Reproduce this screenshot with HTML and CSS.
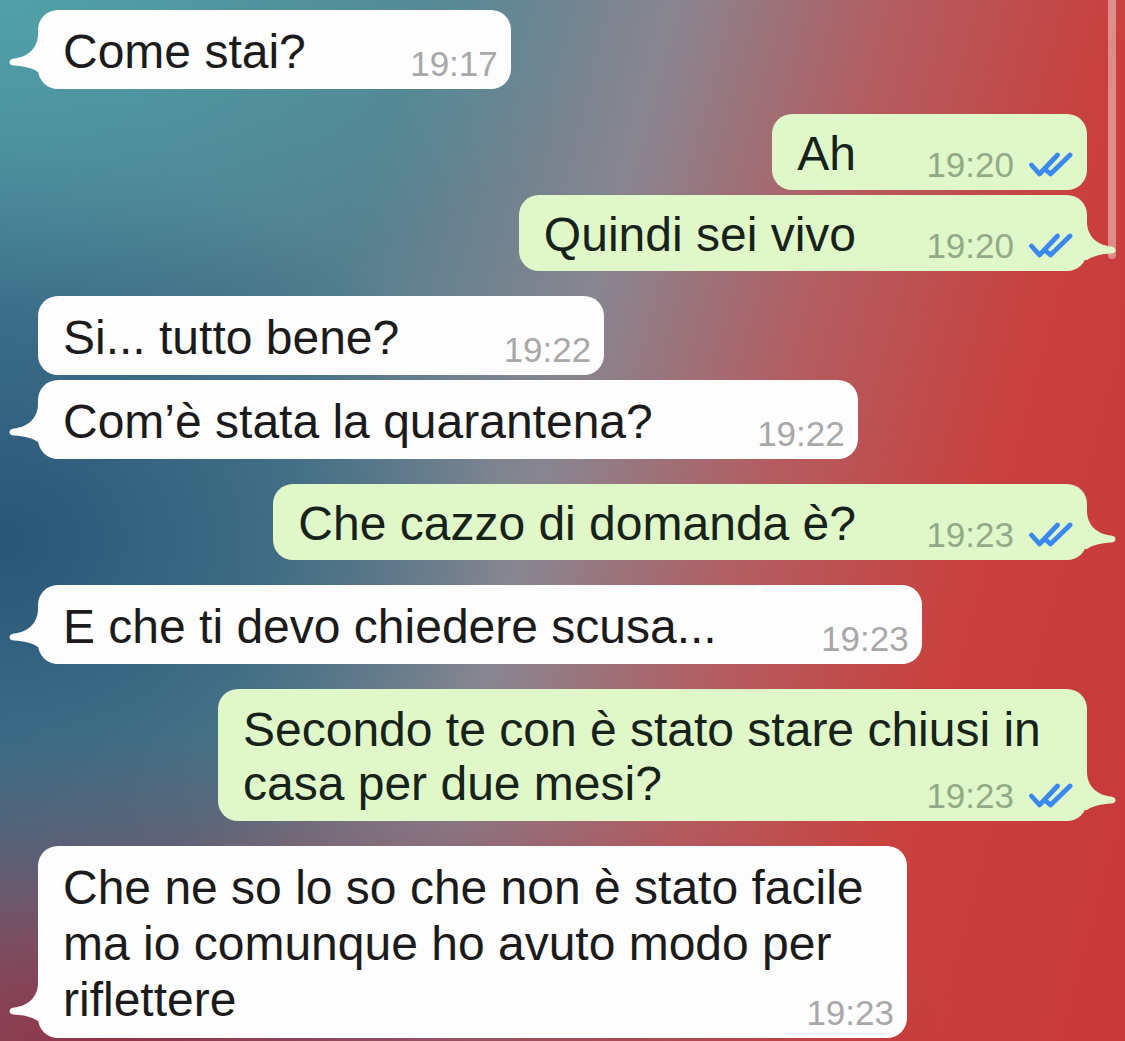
FILE: index.html
```html
<!DOCTYPE html>
<html lang="it">
<head>
    <meta charset="UTF-8">
    <meta name="viewport" content="width=device-width, initial-scale=1.0">
    <title>Chat</title>
    <link rel="stylesheet" href="styles.css">
</head>
<body>
    <div class="scrollbar"></div>

    <div class="chat">
        <div class="msg in">
            <p class="text">Come stai?<span class="pad"></span></p>
            <div class="meta"><span class="time">19:17</span></div>
            <svg class="tail" viewBox="0 0 34 40" width="34" height="40"><path d="M34 0 L30 0 C30 14 20 23 6 24.5 C0 25 0 31.5 6 31.5 C16 32 24 34 30 38 L34 38 Z"/></svg>
        </div>

        <div class="msg out">
            <p class="text">Ah<span class="pad"></span></p>
            <div class="meta">
                <span class="time">19:20</span>
                <svg class="ticks" viewBox="0 0 44 25" width="44" height="25"><path d="M2.5 13 L10.5 22 L28.5 3 M17.5 18.5 L21.5 22 L41 3"/></svg>
            </div>
        </div>

        <div class="msg out cont">
            <p class="text">Quindi sei vivo<span class="pad"></span></p>
            <div class="meta">
                <span class="time">19:20</span>
                <svg class="ticks" viewBox="0 0 44 25" width="44" height="25"><path d="M2.5 13 L10.5 22 L28.5 3 M17.5 18.5 L21.5 22 L41 3"/></svg>
            </div>
            <svg class="tail" viewBox="0 0 34 40" width="34" height="40"><path d="M34 0 L30 0 C30 14 20 23 6 24.5 C0 25 0 31.5 6 31.5 C16 32 24 34 30 38 L34 38 Z"/></svg>
        </div>

        <div class="msg in">
            <p class="text">Si... tutto bene?<span class="pad"></span></p>
            <div class="meta"><span class="time">19:22</span></div>
        </div>

        <div class="msg in cont">
            <p class="text">Com’è stata la quarantena?<span class="pad"></span></p>
            <div class="meta"><span class="time">19:22</span></div>
            <svg class="tail" viewBox="0 0 34 40" width="34" height="40"><path d="M34 0 L30 0 C30 14 20 23 6 24.5 C0 25 0 31.5 6 31.5 C16 32 24 34 30 38 L34 38 Z"/></svg>
        </div>

        <div class="msg out">
            <p class="text">Che cazzo di domanda è?<span class="pad"></span></p>
            <div class="meta">
                <span class="time">19:23</span>
                <svg class="ticks" viewBox="0 0 44 25" width="44" height="25"><path d="M2.5 13 L10.5 22 L28.5 3 M17.5 18.5 L21.5 22 L41 3"/></svg>
            </div>
            <svg class="tail" viewBox="0 0 34 40" width="34" height="40"><path d="M34 0 L30 0 C30 14 20 23 6 24.5 C0 25 0 31.5 6 31.5 C16 32 24 34 30 38 L34 38 Z"/></svg>
        </div>

        <div class="msg in">
            <p class="text">E che ti devo chiedere scusa...<span class="pad"></span></p>
            <div class="meta"><span class="time">19:23</span></div>
            <svg class="tail" viewBox="0 0 34 40" width="34" height="40"><path d="M34 0 L30 0 C30 14 20 23 6 24.5 C0 25 0 31.5 6 31.5 C16 32 24 34 30 38 L34 38 Z"/></svg>
        </div>

        <div class="msg out long">
            <p class="text">Secondo te con è stato stare chiusi in casa per due mesi?<span class="pad"></span></p>
            <div class="meta">
                <span class="time">19:23</span>
                <svg class="ticks" viewBox="0 0 44 25" width="44" height="25"><path d="M2.5 13 L10.5 22 L28.5 3 M17.5 18.5 L21.5 22 L41 3"/></svg>
            </div>
            <svg class="tail" viewBox="0 0 34 40" width="34" height="40"><path d="M34 0 L30 0 C30 14 20 23 6 24.5 C0 25 0 31.5 6 31.5 C16 32 24 34 30 38 L34 38 Z"/></svg>
        </div>

        <div class="msg in long">
            <p class="text">Che ne so lo so che non è stato facile ma io comunque ho avuto modo per riflettere<span class="pad"></span></p>
            <div class="meta"><span class="time">19:23</span></div>
            <svg class="tail" viewBox="0 0 34 40" width="34" height="40"><path d="M34 0 L30 0 C30 14 20 23 6 24.5 C0 25 0 31.5 6 31.5 C16 32 24 34 30 38 L34 38 Z"/></svg>
        </div>
    </div>
</body>
</html>
```

FILE: styles.css
```css
html, body {
    height: 100%;
}

body {
    margin: 0;
    position: relative;
    overflow: hidden;
    font-family: "Liberation Sans", Arial, sans-serif;
    background:
        radial-gradient(ellipse 55% 30% at 0% 0%, rgba(82, 165, 170, 0.9), rgba(82, 165, 170, 0)),
        radial-gradient(ellipse 45% 38% at 0% 52%, rgba(38, 84, 118, 0.95), rgba(38, 84, 118, 0)),
        radial-gradient(ellipse 75% 30% at 10% 100%, rgba(150, 48, 68, 0.95), rgba(150, 48, 68, 0)),
        linear-gradient(105deg, #467f96 0%, #55808f 30%, #888590 48%, #b45c60 64%, #c9403e 80%, #c8383a 100%);
}

.scrollbar {
    position: absolute;
    top: -6px;
    right: 9px;
    width: 8px;
    height: 265px;
    border-radius: 4px;
    background-color: rgba(255, 255, 255, 0.4);
}

.chat {
    display: flex;
    flex-direction: column;
    padding: 10px 38px;
}

.msg {
    position: relative;
    max-width: 930px;
    box-sizing: border-box;
    margin-top: 25px;
    padding: 14px 13px 10px 25px;
    border-radius: 20px;
}

.msg:first-child {
    margin-top: 0;
}

.msg.cont {
    margin-top: 5px;
}

.msg.long {
    max-width: 869px;
}

.in {
    align-self: flex-start;
    background-color: #fdfdfd;
    fill: #fdfdfd;
}

.out {
    align-self: flex-end;
    padding-right: 14px;
    background-color: #e0f7c9;
    fill: #e0f7c9;
}

.text {
    margin: 0;
    font-size: 48px;
    line-height: 55px;
    color: #1b1b1b;
}

.out .text {
    line-height: 52px;
    color: #17221a;
}

.in.long .text {
    line-height: 56px;
}

.out.long .text {
    line-height: 54px;
}

.pad {
    display: inline-block;
    width: 192px;
    height: 1px;
}

.out .pad {
    width: 217px;
}

.meta {
    display: flex;
    justify-content: flex-end;
    align-items: flex-end;
    height: 30px;
    margin-top: -30px;
}

.time {
    font-size: 35px;
    line-height: 30px;
    color: #a8a8a8;
}

.out .time {
    color: #92aa88;
}

.ticks {
    margin-left: 15px;
    margin-bottom: 3px;
    fill: none;
    stroke: #3a88f0;
    stroke-width: 4.8;
    stroke-linecap: round;
    stroke-linejoin: round;
}

.tail {
    position: absolute;
    bottom: 15px;
    left: -30px;
}

.out .tail {
    bottom: 9px;
    left: auto;
    right: -30px;
    transform: scaleX(-1);
}
```
